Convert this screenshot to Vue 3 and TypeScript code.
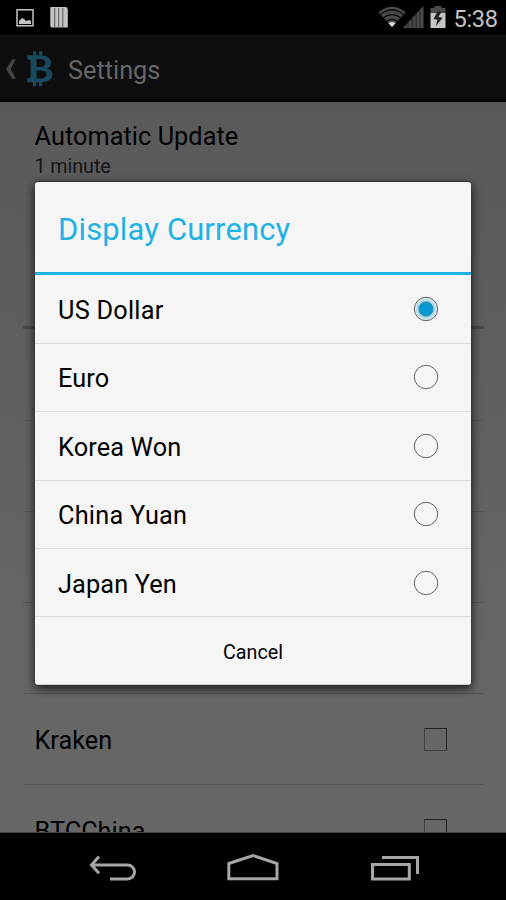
<script setup lang="ts">
import { ref } from 'vue'

interface Currency {
  id: string
  label: string
}

const currencies: Currency[] = [
  { id: 'usd', label: 'US Dollar' },
  { id: 'eur', label: 'Euro' },
  { id: 'krw', label: 'Korea Won' },
  { id: 'cny', label: 'China Yuan' },
  { id: 'jpy', label: 'Japan Yen' },
]

const exchanges = ['Kraken', 'BTCChina']
const selected = ref('usd')
</script>

<template>
  <div class="screen">
    <header class="status">
      <svg class="status-left" width="80" height="35" viewBox="0 0 80 35">
        <path d="M17 9.7h16v16H17z" fill="none" stroke="#c4c4c4" stroke-width="1.5" />
        <path d="M19 24v-3l2-2 1-1 2 1 2 2 3-1 2 1v3z" fill="#c4c4c4" />
        <path d="M50.3 7h16.5v1l1 1v18.500H51.200l-.9-1.500z" fill="#c4c4c4" />
        <path d="M54.700 8v20M58.700 8v20M62.800 8v20" stroke="#555" stroke-width="1" />
      </svg>
      <div class="status-right">
        <svg width="72" height="35" viewBox="0 0 72 35">
          <path d="M.3 12.300Q14 1 27.700 12.300L14 27z" fill="#4b4b4b" />
          <path d="M2.200 14.600Q14 5.300 25.800 14.600M5.300 18Q14 11.300 22.700 18M8.300 21.500Q14 17.200 19.700 21.500" fill="none" stroke="#000" stroke-width="1.200" />
          <path d="M10.500 23.200Q14 20.700 17.500 23.200L14 27z" fill="#d8d8d8" />
          <path d="M25 28L45.500 6v22z" fill="#4b4b4b" />
          <path d="M30 20v9M34.200 16v13M38.200 12v17M42 8v21" stroke="#202020" stroke-width="1" />
          <path d="M52.500 13V8h4V6h7v2h4v5z" fill="#4b4b4b" />
          <path d="M52.500 13h15v15h-15z" fill="#c4c4c4" />
          <path d="M59.500 11.500l-4 7.500 4 .8-1.800 6.500 7-8.500-4.300-.8 3-5z" fill="#222" />
        </svg>
        <span class="clock">5:38</span>
      </div>
    </header>

    <div class="action-bar">
      <svg width="56" height="66" viewBox="0 35 56 66">
        <path d="M12.200 59.200h3.600L10.800 69l5 9.800h-3.600L6 69z" fill="#444" />
        <path
          fill="#174a5f"
          fill-rule="evenodd"
          d="M27.300 55.300H33.200V51.300H36.200V55.300H39V51.300H42.300V55.500Q51 56.500 51 62.800Q51 67 47 68.600Q52.400 70.300 52.400 75Q52.400 81.500 42.300 82.300V86.200H39V82.300H36.200V86.200H33V82.300H27.300V78.300L30.600 77.600V60L27.300 59.200ZM36.500 59V67H40Q45.300 67 45.300 62.800Q45.300 59 40 59ZM36.500 70.500V78.500H40.500Q46.500 78.500 46.500 74.500Q46.500 70.500 40.500 70.500Z"
        />
      </svg>
      <h1>Settings</h1>
    </div>

    <main class="preferences">
      <section class="pref update">
        <div class="pref-title">Automatic Update</div>
        <div class="pref-summary">1 minute</div>
      </section>
      <section class="pref category"></section>
      <section class="pref first"></section>
      <section class="pref"></section>
      <section class="pref"></section>
      <section class="pref"></section>
      <section v-for="name in exchanges" :key="name" class="pref exchange">
        <span class="label">{{ name }}</span>
        <span class="checkbox"></span>
      </section>
    </main>

    <nav class="nav">
      <svg width="506" height="67" viewBox="0 833 506 67" fill="none" stroke="#a6a6a6" stroke-width="3">
        <path d="M99 856.500L91.500 864.900L99 873.300M92 864.900H127.500A7 7 0 0 1 127.500 878.900H110" />
        <path d="M228.800 863.500L253 855.500L277 863.500V878.800H228.800Z" />
        <path d="M372.500 864.600H409.300V878.900H372.500ZM382 857.500H417.500V874" />
      </svg>
    </nav>

    <div class="dialog" role="dialog">
      <h2>Display Currency</h2>
      <ul>
        <li v-for="item in currencies" :key="item.id" @click="selected = item.id">
          <span class="label" :class="item.id">{{ item.label }}</span>
          <svg width="26" height="26" viewBox="0 0 26 26">
            <defs>
              <radialGradient id="glow">
                <stop offset=".6" stop-color="#8ecbe4" />
                <stop offset="1" stop-color="#edf4f6" />
              </radialGradient>
            </defs>
            <circle cx="13" cy="13" r="11.700" :fill="selected === item.id ? 'url(#glow)' : 'none'" stroke="#626262" stroke-width="1" />
            <circle v-if="selected === item.id" cx="13" cy="13" r="7" fill="#0799cf" stroke="#3389a8" stroke-width=".9" />
          </svg>
        </li>
      </ul>
      <button type="button">Cancel</button>
    </div>
  </div>
</template>

<style>
body {
  margin: 0;
  background: #000;
}
</style>

<style scoped>
* {
  box-sizing: border-box;
}
.screen {
  position: relative;
  display: flex;
  flex-direction: column;
  width: 506px;
  height: 900px;
  overflow: hidden;
  background: #000;
  color: #000;
  font-family: Roboto, "Liberation Sans", sans-serif;
  font-size: 25.3px;
}
svg {
  display: block;
  flex: none;
}
.label {
  padding-top: 3px;
  white-space: nowrap;
}
.status {
  display: flex;
  justify-content: space-between;
  height: 35px;
  flex: none;
}
.status-right {
  display: flex;
  width: 128px;
}
.clock {
  margin-left: 3.500px;
  color: #c4c4c4;
  font-size: 23.6px;
  letter-spacing: -0.3px;
  line-height: 38px;
}
.action-bar {
  display: flex;
  align-items: center;
  height: 67px;
  flex: none;
  background: #0e0e0e;
  border-top: 1px solid #171717;
  border-bottom: 2px solid #050505;
}
h1 {
  margin: 5px 0 0 12px;
  color: #666;
  font-size: 25.3px;
  font-weight: 400;
  line-height: 30px;
}
.preferences {
  flex: 1;
  min-height: 0;
  padding: 0 22.500px;
  overflow: hidden;
  background: linear-gradient(#555 0, #5a5a5a 9px, #5b5b5b 100px, #666 550px, #676767);
  border-bottom: 1px solid #444;
}
.pref {
  height: 90.900px;
  padding: 0 12px;
  border-bottom: 1px solid #575757;
}
.update {
  height: 91.500px;
  padding-top: 19px;
}
.pref-title {
  letter-spacing: 0.05px;
  line-height: 31px;
}
.pref-summary {
  color: #151515;
  font-size: 19.700px;
  letter-spacing: -0.05px;
  line-height: 29px;
}
.category {
  height: 135.500px;
  border-bottom: 3px solid #484848;
}
.first {
  height: 92px;
}
.exchange {
  display: flex;
  align-items: center;
  justify-content: space-between;
  padding-right: 36.500px;
}
.checkbox {
  width: 23px;
  height: 23px;
  margin-top: 1px;
  border: 1px solid #222;
  border-left-color: #414141;
  border-bottom-color: #414141;
}
.nav {
  height: 67px;
  flex: none;
}
.dialog {
  position: absolute;
  top: 182px;
  left: 35px;
  width: 436px;
  height: 503px;
  background: #f5f5f5;
  border-bottom: 1px solid #ccc;
  border-radius: 3px;
  box-shadow: 0 3px 10px 1px rgba(0, 0, 0, 0.7), 0 -1px 1px rgba(0, 0, 0, 0.4);
}
h2 {
  height: 93.400px;
  margin: 0;
  padding: 1px 0 0 23px;
  border-bottom: 3px solid #18b2e3;
  color: #22b1e4;
  font-size: 30.900px;
  font-weight: 400;
  letter-spacing: 0.18px;
  line-height: 93px;
}
ul {
  margin: 0;
  padding: 0;
  list-style: none;
}
li {
  display: flex;
  align-items: center;
  justify-content: space-between;
  height: 68.400px;
  padding: 0 32px 0 23px;
  border-bottom: 1px solid #dcdcdc;
  letter-spacing: 0.12px;
}
.usd,
.cny {
  letter-spacing: 0.23px;
}
button {
  display: block;
  width: 100%;
  height: 67px;
  padding: 3px 0 0;
  border: 0;
  background: none;
  color: #000;
  font: 19.700px Roboto, sans-serif;
}
</style>
